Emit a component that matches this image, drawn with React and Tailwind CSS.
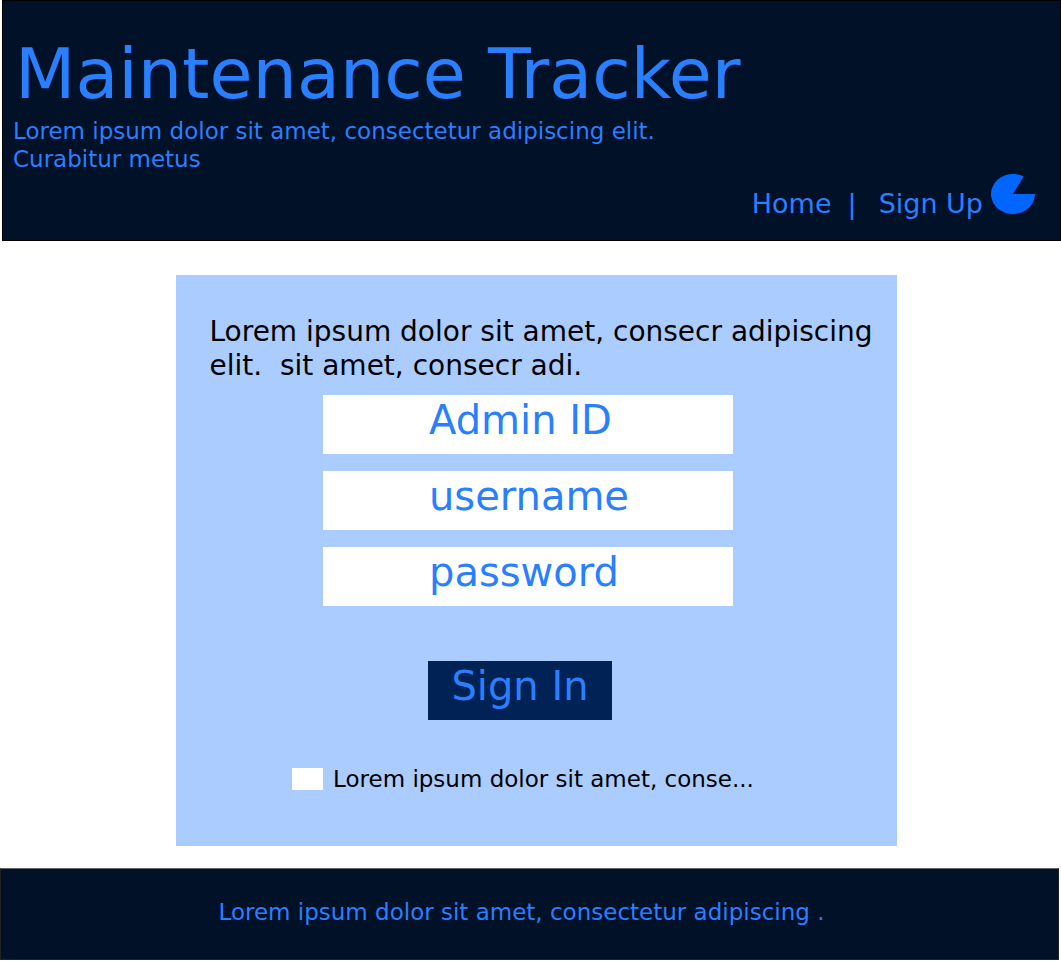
const fields = [
  { id: "admin-id", label: "Admin ID", type: "text" },
  { id: "username", label: "username", type: "text" },
  { id: "password", label: "password", type: "password" },
];

function PieIcon() {
  return (
    <svg viewBox="0 0 44 40" className="h-10 w-11 shrink-0 fill-[#0066ff]" aria-hidden="true">
      <path d="M22 20H44A22 20 0 1 1 32.6 2.5Z" />
    </svg>
  );
}

function Header() {
  return (
    <header className="ml-0.5 border border-black bg-[#001128] pt-[31px] pr-[25px] pb-5 pl-2.5">
      <h1 className="pl-0.5 text-[70px] leading-[84px]">Maintenance Tracker</h1>
      <p className="mt-px max-w-[650px] text-[23px] leading-7">
        Lorem ipsum dolor sit amet, consectetur adipiscing elit. Curabitur metus
      </p>
      <nav className="mt-px flex justify-end text-[27px] leading-8">
        <div className="flex gap-4 pt-3.5">
          <a href="#home">Home</a>
          <span className="pr-1.5">|</span>
          <a href="#sign-up">Sign Up</a>
        </div>
        <a href="#account" aria-label="Account" className="ml-2">
          <PieIcon />
        </a>
      </nav>
    </header>
  );
}

function SignInCard() {
  return (
    <form className="w-full max-w-[721px] bg-[#aaccff] pt-10 pb-[55px]">
      <p className="pr-4 pl-[34px] text-[28px] leading-[34px] whitespace-pre-wrap text-black">
        {"Lorem ipsum dolor sit amet, consecr adipiscing elit.  sit amet, consecr adi."}
      </p>
      <div className="mt-3 flex flex-col items-center gap-[17px] pr-4">
        {fields.map((field) => (
          <input
            key={field.id}
            id={field.id}
            type={field.type}
            aria-label={field.label}
            placeholder={field.label}
            className="h-[59px] w-full max-w-[410px] bg-white pb-2.5 pl-[106px] text-[40px] text-[#2a7fff] placeholder:text-[#2a7fff] placeholder:opacity-100"
          />
        ))}
      </div>
      <div className="mt-[55px] flex flex-col items-center gap-[47px] pr-8">
        <button type="button" className="h-[59px] w-[184px] bg-[#002255] pb-2.5 text-[40px] leading-[48px]">
          Sign In
        </button>
        <label className="flex items-center gap-2.5 pl-1.5 text-[23px] leading-6 text-black">
          <input type="checkbox" className="h-[22px] w-[31px] appearance-none bg-white checked:bg-[#2a7fff]" />
          Lorem ipsum dolor sit amet, conse...
        </label>
      </div>
    </form>
  );
}

export default function App() {
  return (
    <div className="bg-white font-['DejaVu_Sans',sans-serif] text-[#2a7fff]">
      <Header />
      <main className="flex justify-center pt-[34px] pb-[22px] pl-[11px]">
        <SignInCard />
      </main>
      <footer className="mr-0.5 border border-[#222222] border-t-[#666666] bg-[#001128] pt-7 pr-4 pb-8 text-center text-[23px] leading-[30px]">
        Lorem ipsum dolor sit amet, consectetur adipiscing .
      </footer>
    </div>
  );
}
